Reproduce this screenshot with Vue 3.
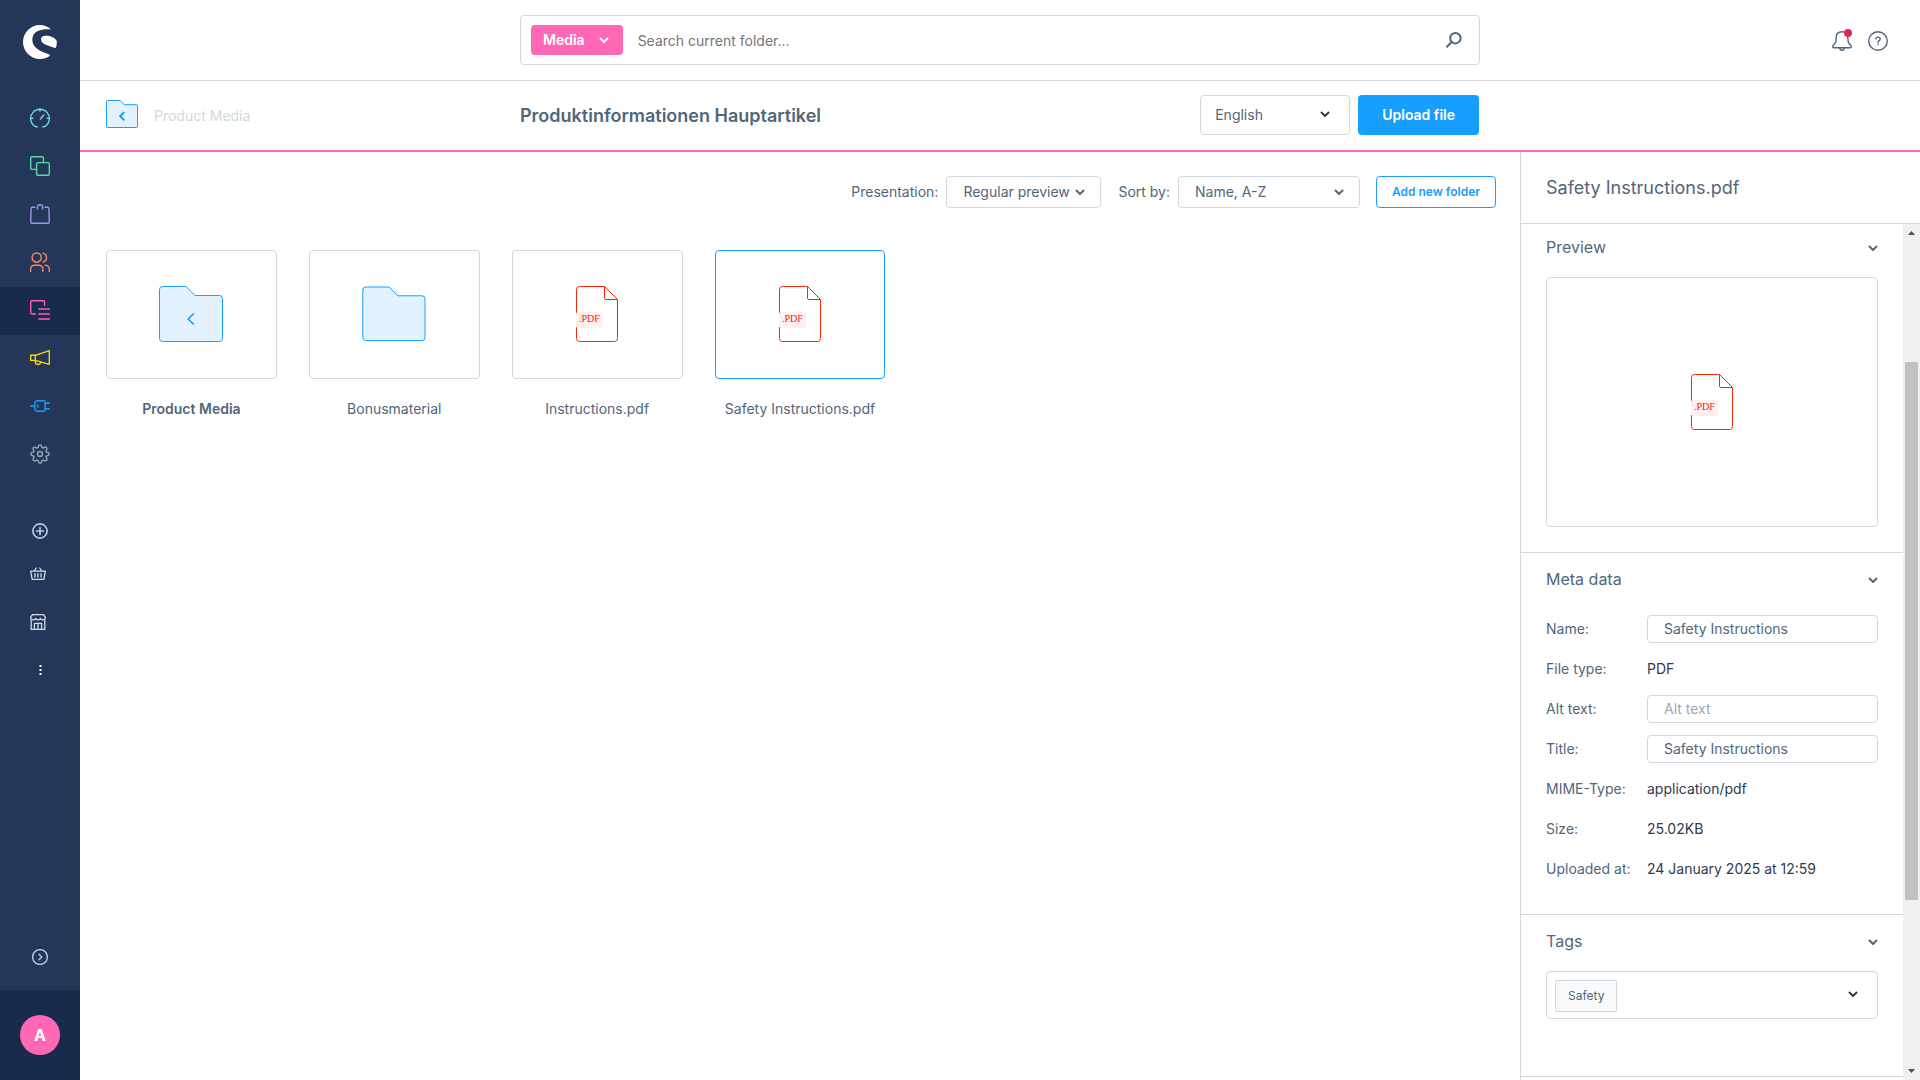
<script setup>
import { ref } from 'vue'

const navigation = [
  { name: 'Dashboard', color: '#6ed5f0', paths: ['M7.3 18.7H5.6A9.3 9.3 0 1 1 14.4 18.7H12.7', 'M10 .7V3.2M.7 10.3H2.8M17.2 10.3H19.3M10.4 11L13.8 7'] },
  { name: 'Catalogues', color: '#57d9a3', paths: ['M6.6 13.4H2A1.3 1.3 0 0 1 .7 12.1V2A1.3 1.3 0 0 1 2 .7H12.1A1.3 1.3 0 0 1 13.4 2V6.6', 'M7.9 6.6H18A1.3 1.3 0 0 1 19.3 7.9V18A1.3 1.3 0 0 1 18 19.3H7.9A1.3 1.3 0 0 1 6.6 18V7.9A1.3 1.3 0 0 1 7.9 6.6Z'] },
  { name: 'Orders', color: '#a092f0', paths: ['M5 3.3H2.3A1.2 1.2 0 0 0 1.1 4.5L.7 18A1.3 1.3 0 0 0 2 19.3H18A1.3 1.3 0 0 0 19.3 18L18.9 4.5A1.2 1.2 0 0 0 17.7 3.3H15', 'M7.4 5V3.3A2.6 2.6 0 0 1 12.6 3.3V5'] },
  { name: 'Customers', color: '#f88962', paths: ['M11.3 5.6A4.6 4.6 0 1 1 2.1 5.6A4.6 4.6 0 0 1 11.3 5.6Z', 'M12.9 1.1A4.6 4.6 0 0 1 12.9 10.1', 'M.7 19.2V16.8A3.6 3.6 0 0 1 4.3 13.2H9.2A3.6 3.6 0 0 1 12.8 16.8V19.2', 'M15.2 13.3C17.7 13.3 19.3 15.2 19.3 17.3V19.2'] },
  { name: 'Content', color: '#ff5fb0', active: true, paths: ['M5.4 14H2A1.3 1.3 0 0 1 .7 12.7V2A1.3 1.3 0 0 1 2 .7H13.2A1.3 1.3 0 0 1 14.5 2V5.2', 'M8.8 9H19.6M8.8 14H19.6M8.8 19H19.6'] },
  { name: 'Marketing', color: '#ffd700', paths: ['M5.3 7.3H.7V12.4H5.3Z', 'M5.3 7.3L19.3 2.7V16.3L5.3 12.4', 'M5.4 12.6V14A2.6 2.6 0 0 0 10.5 14.6V14'] },
  { name: 'Extensions', color: '#189eff', paths: ['M.6 10H4.8', 'M7 4.7H13.2A2 2 0 0 1 15.2 6.7V13.3A2 2 0 0 1 13.2 15.3H7C5.6 14.9 4.8 14 4.8 12.8V7.2C4.8 6 5.6 5.1 7 4.7Z', 'M15.2 7.3H19.5M15.2 12.7H19.5M7.8 9V11'] },
]

const entries = [
  { name: 'Product Media', kind: 'parent' },
  { name: 'Bonusmaterial', kind: 'folder' },
  { name: 'Instructions.pdf', kind: 'pdf' },
  { name: 'Safety Instructions.pdf', kind: 'pdf', selected: true },
]

const search = ref('')
const meta = ref([
  { id: 'name', label: 'Name:', value: 'Safety Instructions', editable: true },
  { id: 'type', label: 'File type:', value: 'PDF' },
  { id: 'alt', label: 'Alt text:', value: '', placeholder: 'Alt text', editable: true },
  { id: 'title', label: 'Title:', value: 'Safety Instructions', editable: true },
  { id: 'mime', label: 'MIME-Type:', value: 'application/pdf' },
  { id: 'size', label: 'Size:', value: '25.02KB' },
  { id: 'uploaded', label: 'Uploaded at:', value: '24 January 2025 at 12:59' },
])
</script>

<template>
  <div class="admin">
    <aside class="sidebar">
      <a class="logo" href="#" aria-label="Home">
        <svg width="34" height="34" viewBox="69 75 102 102" fill="#fff">
          <path d="M153 88C144 80 132 75 120 75C92 75 69 98 69 126C69 154 92 177 120 177C131 177 141 174 149 168C151 166 150 165 147 163C132 157 97 147 97 119C97 98 116 88 138 88Z" />
          <path d="M123 118C123 111 128 107 138 107C152 107 165 113 170 122C171 129 170 137 168 142C167 145 165 144 162 143C148 138 123 133 123 118Z" />
        </svg>
      </a>
      <nav class="menu">
        <a v-for="item in navigation" :key="item.name" href="#" class="menu-item" :class="{ active: item.active }" :aria-label="item.name">
          <svg class="icon" width="20" height="20" viewBox="0 0 20 20" :stroke="item.color">
            <path v-for="d in item.paths" :key="d" :d="d" />
          </svg>
        </a>
        <a href="#" class="menu-item" aria-label="Settings">
          <svg class="icon gear" width="20" height="20" viewBox="0 0 24 24" stroke="#94a6b0">
            <circle cx="12" cy="12" r="3" />
            <path d="M19.4 15a1.65 1.65 0 0 0 .33 1.82l.06.06a2 2 0 0 1 0 2.83 2 2 0 0 1-2.83 0l-.06-.06a1.65 1.65 0 0 0-1.82-.33 1.65 1.65 0 0 0-1 1.51V21a2 2 0 0 1-2 2 2 2 0 0 1-2-2v-.09A1.65 1.65 0 0 0 9 19.4a1.65 1.65 0 0 0-1.82.33l-.06.06a2 2 0 0 1-2.83 0 2 2 0 0 1 0-2.83l.06-.06a1.65 1.65 0 0 0 .33-1.82 1.65 1.65 0 0 0-1.51-1H3a2 2 0 0 1-2-2 2 2 0 0 1 2-2h.09A1.65 1.65 0 0 0 4.6 9a1.65 1.65 0 0 0-.33-1.82l-.06-.06a2 2 0 0 1 0-2.83 2 2 0 0 1 2.83 0l.06.06a1.65 1.65 0 0 0 1.82.33H9a1.65 1.65 0 0 0 1-1.51V3a2 2 0 0 1 2-2 2 2 0 0 1 2 2v.09a1.65 1.65 0 0 0 1 1.51 1.65 1.65 0 0 0 1.82-.33l.06-.06a2 2 0 0 1 2.83 0 2 2 0 0 1 0 2.83l-.06.06a1.65 1.65 0 0 0-.33 1.82V9a1.65 1.65 0 0 0 1.51 1H21a2 2 0 0 1 2 2 2 2 0 0 1-2 2h-.09a1.65 1.65 0 0 0-1.51 1z" />
          </svg>
        </a>
      </nav>
      <div class="shortcuts">
        <button type="button" class="shortcut first" aria-label="Add sales channel">
          <svg class="icon" width="16" height="16" viewBox="0 0 16 16" stroke="#b9c9df">
            <circle cx="8" cy="8" r="7.1" />
            <path d="M8 4.6V11.4M4.6 8H11.4" />
          </svg>
        </button>
        <a href="#" class="shortcut shop" aria-label="Storefront">
          <svg class="icon" width="16" height="16" viewBox="0 0 16 16" stroke="#d3dbe6">
            <path d="M.7 5.2H15.3L13.8 13.4H2.2ZM4.4 5L6.2 2M11.6 5L9.8 2M5 7.6V11M8 7.6V11M11 7.6V11" />
          </svg>
        </a>
        <a href="#" class="shortcut shop" aria-label="Marketplace">
          <svg class="icon" width="16" height="16" viewBox="0 0 16 16" stroke="#d3dbe6">
            <path d="M2.4.6H13.6L15.4 3.4C15.4 6.5 10.7 6.5 10.4 4.4C10 6.4 6 6.4 5.6 4.4C5.3 6.5.6 6.5.6 3.4ZM1.2 6V15.4H14.8V6M4.4 15.4V9.4H11.6V15.4M8 9.4V15.4" />
          </svg>
        </a>
        <button type="button" class="shortcut" aria-label="More">
          <svg width="16" height="16" viewBox="0 0 16 16" fill="#fff">
            <path d="M7.5 3h2v2h-2zM7.5 7h2v2h-2zM7.5 11h2v2h-2z" />
          </svg>
        </button>
      </div>
      <button type="button" class="expand" aria-label="Expand menu">
        <svg class="icon" width="16" height="16" viewBox="0 0 16 16" stroke="#b9c9df">
          <circle cx="8" cy="8" r="7.4" />
          <path d="M7 5.2L9.8 8L7 10.8" />
        </svg>
      </button>
      <div class="user"><button type="button" class="avatar">A</button></div>
    </aside>

    <div class="page">
      <header class="topbar">
        <form class="search" @submit.prevent>
          <button type="button" class="scope">
            Media
            <svg class="chevron" width="10" height="6" viewBox="0 0 10 6"><path d="M1 1L5 5L9 1" /></svg>
          </button>
          <input v-model="search" type="text" placeholder="Search current folder..." aria-label="Search current folder">
          <button type="submit" class="find" aria-label="Search">
            <svg width="16" height="16" viewBox="0 0 16 16"><circle cx="9.4" cy="6.2" r="5.2" /><path d="M5.6 10L1 14.8" /></svg>
          </button>
        </form>
        <div class="tools">
          <button type="button" aria-label="Notifications" class="bell">
            <svg class="icon" width="20" height="20" viewBox="0 0 20 20">
              <path d="M10 .8C6.5.8 4.2 3 4.2 6.3C4.2 11 3.6 12 1.4 14.3C.2 15.7.6 16.8 2 16.8H18C19.4 16.8 19.8 15.7 18.6 14.3C16.4 12 15.8 11 15.8 6.3C15.8 3 13.5.8 10 .8ZM7.8 17C7.8 20 12.2 20 12.2 17" />
            </svg>
            <span class="unread"></span>
          </button>
          <button type="button" aria-label="Help">
            <svg class="icon" width="20" height="20" viewBox="0 0 20 20">
              <circle cx="10" cy="10" r="9.3" />
              <path d="M8 8.1C8 5.4 12.2 5.5 12.2 8C12.2 9.7 10.1 9.6 10.1 11.4M10.1 13.3V13.5" />
            </svg>
          </button>
        </div>
      </header>

      <div class="smartbar">
        <a href="#" class="back">
          <svg width="32" height="28" viewBox="0 0 32 28" fill="#e2f2ff" stroke="#189eff">
            <path d="M1.5.5H14L18.3 4.7H30.5A1 1 0 0 1 31.5 5.7V26.5A1 1 0 0 1 30.5 27.5H1.5A1 1 0 0 1 .5 26.5V1.5A1 1 0 0 1 1.5.5Z" />
            <path d="M18.3 12L14.2 16.2L18.3 20.4" fill="none" stroke-width="2" />
          </svg>
          <span>Product Media</span>
        </a>
        <div class="heading">
          <h1>Produktinformationen Hauptartikel</h1>
          <div class="actions">
            <div class="select language">
              <select aria-label="Language"><option>English</option></select>
              <svg class="chevron" width="10" height="6" viewBox="0 0 10 6"><path d="M1 1L5 5L9 1" /></svg>
            </div>
            <button type="button" class="upload">Upload file</button>
          </div>
        </div>
      </div>

      <div class="body">
        <main class="library">
          <div class="toolbar">
            <label for="presentation">Presentation:</label>
            <div class="select presentation">
              <select id="presentation"><option>Regular preview</option></select>
              <svg class="chevron" width="10" height="6" viewBox="0 0 10 6"><path d="M1 1L5 5L9 1" /></svg>
            </div>
            <label for="sorting">Sort by:</label>
            <div class="select sorting">
              <select id="sorting"><option>Name, A-Z</option></select>
              <svg class="chevron" width="10" height="6" viewBox="0 0 10 6"><path d="M1 1L5 5L9 1" /></svg>
            </div>
            <button type="button" class="add-folder">Add new folder</button>
          </div>
          <div class="grid">
            <a v-for="entry in entries" :key="entry.name" href="#" class="entry" :class="[entry.kind, { selected: entry.selected }]">
              <span class="tile">
                <svg v-if="entry.kind === 'pdf'" width="42" height="56" viewBox="0 0 42 56" fill="none" stroke="#f02806">
                  <path d="M3.5.5H28.5L41.5 13.5V52.5A3 3 0 0 1 38.5 55.5H3.5A3 3 0 0 1 .5 52.5V3.5A3 3 0 0 1 3.5.5ZM28.5.5V12A1.5 1.5 0 0 0 30 13.5H41.5" />
                  <rect y="26" width="27" height="16" rx="2" fill="#ffefef" stroke="none" />
                  <text x="3" y="36" class="ext">.PDF</text>
                </svg>
                <svg v-else width="64" height="56" viewBox="0 0 64 56" fill="#e2f2ff" stroke="#189eff">
                  <path v-if="entry.kind === 'parent'" d="M3.5.5H27L36 9.5H60.5A3 3 0 0 1 63.5 12.5V52.5A3 3 0 0 1 60.5 55.5H3.5A3 3 0 0 1 .5 52.5V3.5A3 3 0 0 1 3.5.5Z" />
                  <path v-else d="M3.5 1H27L36 9.8H60A3 3 0 0 1 63 12.8V51.6A3 3 0 0 1 60 54.6H3.5A3 3 0 0 1 .8 51.6V4A3 3 0 0 1 3.5 1Z" />
                  <path v-if="entry.kind === 'parent'" d="M34.8 27.5L29.2 33L34.8 38.5" fill="none" stroke-width="1.6" />
                </svg>
              </span>
              <span class="caption">{{ entry.name }}</span>
            </a>
          </div>
        </main>

        <aside class="details">
          <h2>Safety Instructions.pdf</h2>
          <div class="scroller">
            <div class="sections">
              <section class="preview">
                <h3><button type="button">Preview <svg class="chevron" width="10" height="6" viewBox="0 0 10 6"><path d="M1 1L5 5L9 1" /></svg></button></h3>
                <div class="preview-box">
                  <svg width="42" height="56" viewBox="0 0 42 56" fill="none" stroke="#f02806">
                    <path d="M3.5.5H28.5L41.5 13.5V52.5A3 3 0 0 1 38.5 55.5H3.5A3 3 0 0 1 .5 52.5V3.5A3 3 0 0 1 3.5.5ZM28.5.5V12A1.5 1.5 0 0 0 30 13.5H41.5" />
                    <rect y="26" width="27" height="16" rx="2" fill="#ffefef" stroke="none" />
                    <text x="3" y="36" class="ext">.PDF</text>
                  </svg>
                </div>
              </section>
              <section>
                <h3><button type="button">Meta data <svg class="chevron" width="10" height="6" viewBox="0 0 10 6"><path d="M1 1L5 5L9 1" /></svg></button></h3>
                <dl>
                  <div v-for="row in meta" :key="row.id" class="row">
                    <dt>
                      <label v-if="row.editable" :for="row.id">{{ row.label }}</label>
                      <template v-else>{{ row.label }}</template>
                    </dt>
                    <dd>
                      <input v-if="row.editable" :id="row.id" v-model="row.value" type="text" :placeholder="row.placeholder">
                      <template v-else>{{ row.value }}</template>
                    </dd>
                  </div>
                </dl>
              </section>
              <section class="tags">
                <h3><button type="button">Tags <svg class="chevron" width="10" height="6" viewBox="0 0 10 6"><path d="M1 1L5 5L9 1" /></svg></button></h3>
                <div class="tag-field">
                  <span class="tag">Safety</span>
                  <input type="text" aria-label="Add tag">
                  <button type="button" aria-label="Show tags"><svg class="chevron" width="10" height="6" viewBox="0 0 10 6"><path d="M1 1L5 5L9 1" /></svg></button>
                </div>
              </section>
            </div>
            <div class="scrollbar" aria-hidden="true">
              <svg width="7" height="4" viewBox="0 0 7 4"><path d="M0 4L3.5 0L7 4Z" /></svg>
              <div class="track"><div class="thumb"></div></div>
              <svg width="7" height="4" viewBox="0 0 7 4"><path d="M0 0L3.5 4L7 0Z" /></svg>
            </div>
          </div>
        </aside>
      </div>
    </div>
  </div>
</template>

<style>
body { margin: 0; background: #fff; }
</style>

<style scoped>
.admin, .admin * { box-sizing: border-box; }
.admin {
  --line: #d1d9e0;
  --text: #52667a;
  --blue: #189eff;
  --pink: #ff68b4;
  display: flex;
  height: 100vh;
  overflow: hidden;
  color: var(--text);
  font: 14px/20px Inter, "Liberation Sans", sans-serif;
}
button, input, select { font: inherit; color: inherit; margin: 0; outline: 0; }
button { padding: 0; border: 0; background: none; cursor: pointer; }
a { color: inherit; text-decoration: none; }
h1, h2, h3, dl, dd { margin: 0; }
svg { display: block; flex: none; }
.icon { fill: none; stroke-width: 1.4; stroke-linecap: round; stroke-linejoin: round; }
.icon.gear { stroke-width: 1.7; }
.chevron { fill: none; stroke: currentColor; stroke-width: 2; }

.sidebar { display: flex; flex-direction: column; width: 80px; flex: none; background: #243758; }
.logo { display: flex; justify-content: center; padding-top: 25px; height: 95px; }
.menu-item { display: flex; align-items: center; justify-content: center; height: 48px; padding-bottom: 2px; }
.menu-item.active { background: #182b4d; }
.shortcuts { display: flex; flex-direction: column; padding-top: 32px; }
.shortcut { display: flex; align-items: center; justify-content: center; height: 48px; }
.shortcut.first { height: 39px; }
.shortcut.first .icon { stroke-width: 1.7; }
.shortcut.shop { padding-right: 4px; }
.shortcut.shop .icon { stroke-width: 1.3; }
.expand { display: flex; align-items: center; justify-content: center; height: 66px; margin-top: auto; }
.user { display: flex; align-items: center; justify-content: center; height: 90px; background: #182b4d; }
.avatar { width: 40px; height: 40px; border-radius: 50%; background: var(--pink); color: #fff; font-size: 16px; font-weight: 700; }

.page { display: flex; flex-direction: column; flex: 1; min-width: 0; }
.topbar, .smartbar { display: grid; grid-template-columns: 1fr minmax(0, 960px) 1fr; align-items: center; flex: none; }
.topbar { height: 81px; border-bottom: 1px solid var(--line); }
.search { grid-column: 2; display: flex; align-items: center; height: 50px; padding: 0 17px 0 10px; border: 1px solid var(--line); border-radius: 4px; }
.scope { display: flex; align-items: center; gap: 14px; height: 30px; padding: 0 14px 0 12px; border-radius: 4px; background: var(--pink); color: #fff; font-weight: 600; }
.search input { flex: 1; min-width: 0; padding: 2px 15px 0; border: 0; background: none; }
.search input::placeholder { color: #757575; }
.find svg { fill: none; stroke: var(--text); stroke-width: 2; stroke-linecap: round; }
.tools { display: flex; justify-content: flex-end; gap: 16px; padding: 2px 32px 0 0; }
.tools button { position: relative; }
.tools .icon { stroke: #52667a; }
.unread { position: absolute; top: -2px; right: 0; width: 8px; height: 8px; border-radius: 50%; background: #de294c; }

.smartbar { height: 71px; border-bottom: 2px solid var(--pink); }
.back { display: flex; align-items: center; gap: 16px; padding-left: 26px; color: var(--line); }
.back svg { margin-bottom: 3px; }
.heading { display: flex; align-items: center; }
h1 { flex: 1; font-size: 18px; line-height: 24px; font-weight: 600; }
.actions { display: flex; gap: 8px; padding: 0 1px 1px 0; }

.select { position: relative; }
.select select { width: 100%; height: 100%; padding: 0 16px; border: 1px solid var(--line); border-radius: 4px; background: #fff; appearance: none; }
.select .chevron { position: absolute; top: 50%; right: 16px; margin-top: -3px; pointer-events: none; }
.language { width: 150px; height: 40px; }
.language select { padding: 0 14px; }
.language .chevron { right: 20px; margin-top: -4px; color: #303a4f; }
.upload { height: 40px; padding: 0 24px; border-radius: 4px; background: var(--blue); color: #fff; font-weight: 600; }

.body { display: flex; flex: 1; min-height: 0; }
.library { flex: 1; min-width: 0; }
.toolbar { display: flex; align-items: center; justify-content: flex-end; padding: 24px 24px 0; }
.toolbar .select { height: 32px; margin-left: 8px; }
.toolbar .presentation { width: 155px; margin-right: 17px; }
.toolbar .sorting { width: 182px; margin-right: 16px; }
.add-folder { width: 120px; height: 32px; border: 1px solid var(--blue); border-radius: 4px; color: var(--blue); font-size: 12px; font-weight: 600; }
.grid { display: grid; grid-template-columns: repeat(auto-fill, minmax(160px, 1fr)); gap: 32px; padding: 42px 26px; }
.entry { display: flex; flex-direction: column; gap: 20px; text-align: center; }
.tile { display: flex; align-items: center; justify-content: center; height: 129px; padding-bottom: 1px; border: 1px solid var(--line); border-radius: 4px; }
.selected .tile { border-color: var(--blue); }
.parent .caption { font-weight: 600; }
.ext { font: 10px "Liberation Serif", serif; fill: #f02806; stroke: none; }

.details { display: flex; flex-direction: column; flex: none; width: 400px; border-left: 1px solid var(--line); }
h2 { padding: 24px 25px 23px; border-bottom: 1px solid var(--line); font-size: 18px; line-height: 24px; font-weight: 400; }
.scroller { display: flex; flex: 1; min-height: 0; }
.sections { flex: 1; min-width: 0; overflow: hidden; }
section { padding: 14px 25px 25px; border-bottom: 1px solid var(--line); }
.preview { padding-top: 11px; }
.tags { padding-bottom: 57px; }
h3 { margin-bottom: 18px; font-size: 16px; line-height: 24px; font-weight: 400; }
h3 button { display: flex; align-items: center; justify-content: space-between; width: 100%; }
h3 .chevron { margin-top: 2px; }
.preview-box { display: flex; align-items: center; justify-content: center; height: 250px; border: 1px solid var(--line); border-radius: 4px; }
.row { display: flex; align-items: center; height: 40px; }
dt { flex: none; width: 101px; }
dd { flex: 1; min-width: 0; color: #303a4f; }
dd input { display: block; width: 100%; height: 28px; padding: 0 16px 1px; border: 1px solid var(--line); border-radius: 4px; color: var(--text); }
dd input::placeholder { color: #9aa8b9; opacity: 1; }
.tag-field { display: flex; align-items: center; height: 48px; padding: 1px 19px 0 8px; border: 1px solid var(--line); border-radius: 4px; }
.tag { height: 32px; padding: 0 12px; border: 1px solid var(--line); border-radius: 2px; background: #f9fafb; font-size: 12px; line-height: 30px; }
.tag-field input { flex: 1; min-width: 0; border: 0; }
.tag-field button { padding-bottom: 3px; color: #303a4f; }
.scrollbar { display: flex; flex-direction: column; align-items: center; width: 17px; padding: 7px 0; background: #f0f0f0; fill: #505050; }
.track { display: flex; flex: 1; width: 13px; padding: 127px 0 169px; }
.thumb { flex: 1; background: #c1c1c1; }
</style>
